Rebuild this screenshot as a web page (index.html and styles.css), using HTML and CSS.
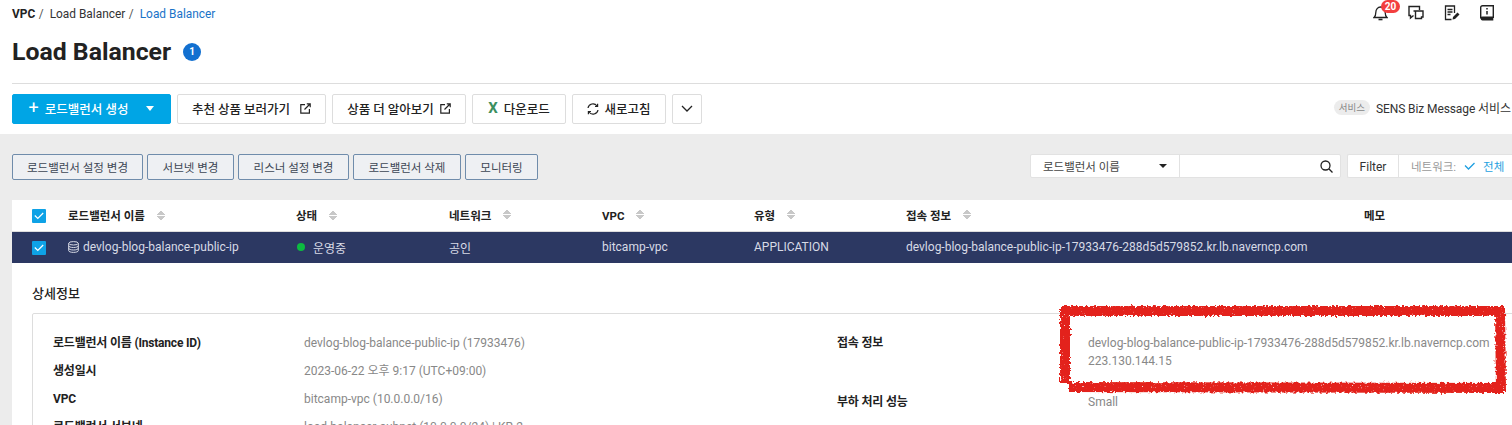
FILE: index.html
```html
<!DOCTYPE html>
<html lang="ko">
<head>
    <meta charset="UTF-8">
    <title>Load Balancer</title>
    <link rel="stylesheet" href="styles.css">
</head>
<body>
<div class="page">
    <div class="top">
        <div class="topbar">
            <div class="crumbs">
                <b>VPC</b><span class="sep">/</span><span>Load Balancer</span><span class="sep">/</span><span class="crumb-on">Load Balancer</span>
            </div>
            <div class="top-icons">
                <div class="bell">
                    <svg width="15" height="16" viewBox="0 0 15 16" fill="none" stroke="#222" stroke-width="1.3"><path d="M1 12.500c1.300-1 1.800-2.500 1.800-5 0-3 2-5.500 4.700-5.500s4.700 2.500 4.700 5.500c0 2.500.5 4 1.800 5z"/><path d="M5.500 14.500h4" stroke-width="1.600"/></svg>
                    <span class="badge-red">20</span>
                </div>
                <svg width="16" height="16" viewBox="0 0 16 16" fill="none" stroke="#222" stroke-width="1.400"><path d="M11.500 5V1.500H1v9h1.500v2.500l3-2.500"/><path d="M5.500 6h9.500v6h-1.500v1.500H7.500V6z" fill="#fff"/></svg>
                <svg width="16" height="16" viewBox="0 0 16 16" fill="none" stroke="#222" stroke-width="1.300"><path d="M10.500 8V1H1.500v13.500h6"/><path d="M3.500 4.500h5M3.500 7h5M3.500 9.500h3"/><path d="M8.500 14.500l.5-2.500 4.500-4.500 2 2-4.500 4.500z" fill="#222" stroke="none"/></svg>
                <svg width="14" height="16" viewBox="0 0 14 16" fill="none"><path d="M2.500.7h10.800v11.600H2.500c-1 0-1.800.5-1.800 1.300V2.500C.7 1.500 1.500.7 2.500.7z" stroke="#222" stroke-width="1.400"/><path d="M.7 13.500c0-1 .8-1.500 1.800-1.500h10.800v3.500H2.500c-1 0-1.800-.8-1.800-2z" fill="#222"/><path d="M7 3v1.500M7 6v3.500" stroke="#222" stroke-width="1.500"/></svg>
            </div>
        </div>
        <div class="title-row">
            <h1>Load Balancer</h1>
            <span class="count">1</span>
        </div>
        <div class="toolbar">
            <button class="btn btn-create"><span class="plus">+</span>로드밸런서 생성<span class="caret-white"></span></button>
            <button class="btn btn-rec">추천 상품 보러가기<svg class="ext" width="11" height="11" viewBox="0 0 11 11" fill="none" stroke="#222" stroke-width="1.200"><path d="M5 1.600H.8v8.600h8.600V6"/><path d="M6.800.8h3.400v3.400M10 1L4.500 6.500"/></svg></button>
            <button class="btn btn-more">상품 더 알아보기<svg class="ext" width="11" height="11" viewBox="0 0 11 11" fill="none" stroke="#222" stroke-width="1.200"><path d="M5 1.600H.8v8.600h8.600V6"/><path d="M6.800.8h3.400v3.400M10 1L4.500 6.500"/></svg></button>
            <button class="btn btn-down"><span class="excel">X</span>다운로드</button>
            <button class="btn btn-refresh"><svg width="12" height="12" viewBox="0 0 12 12" fill="none" stroke="#222" stroke-width="1.200"><path d="M1 5a5 5 0 0 1 9-2"/><path d="M11 7a5 5 0 0 1-9 2"/><path d="M10.600.8v2.700H8M1.400 11.200V8.500H4"/></svg>새로고침</button>
            <button class="btn btn-drop"><svg width="12" height="7" viewBox="0 0 12 7" fill="none" stroke="#222" stroke-width="1.300"><path d="M1 1l5 5 5-5"/></svg></button>
            <div class="service"><span class="pill">서비스</span><span class="service-name">SENS Biz Message 서비스</span></div>
        </div>
    </div>

    <div class="content">
        <div class="actions">
            <button class="act a1">로드밸런서 설정 변경</button>
            <button class="act a2">서브넷 변경</button>
            <button class="act a3">리스너 설정 변경</button>
            <button class="act a4">로드밸런서 삭제</button>
            <button class="act a5">모니터링</button>
            <div class="search">
                <div class="search-select">로드밸런서 이름<span class="caret-dark"></span></div>
                <div class="search-input"><svg width="13" height="13" viewBox="0 0 13 13" fill="none" stroke="#222" stroke-width="1.300"><circle cx="5.500" cy="5.500" r="4.500"/><path d="M8.800 8.800L12.500 12.500"/></svg></div>
            </div>
            <div class="filter">
                <div class="filter-label">Filter</div>
                <div class="filter-val"><span class="filter-key">네트워크:</span><svg width="11" height="8" viewBox="0 0 11 8" fill="none" stroke="#1e9fe0" stroke-width="1.300"><path d="M1 3.500l3.500 3.500L10.500 1"/></svg><span class="filter-all">전체</span></div>
            </div>
        </div>

        <div class="panel">
            <div class="row head">
                <div class="c-check"><span class="check"><svg width="10" height="8" viewBox="0 0 10 8" fill="none" stroke="#fff" stroke-width="1.200"><path d="M.8 3.500L3.800 6.500 9.200 1"/></svg></span></div>
                <div class="c-name">로드밸런서 이름<span class="sort"></span></div>
                <div class="c-state">상태<span class="sort"></span></div>
                <div class="c-net">네트워크<span class="sort"></span></div>
                <div class="c-vpc">VPC<span class="sort"></span></div>
                <div class="c-type">유형<span class="sort"></span></div>
                <div class="c-conn">접속 정보<span class="sort"></span></div>
                <div class="c-memo">메모</div>
            </div>
            <div class="row selected">
                <div class="c-check"><span class="check"><svg width="10" height="8" viewBox="0 0 10 8" fill="none" stroke="#fff" stroke-width="1.200"><path d="M.8 3.500L3.800 6.500 9.200 1"/></svg></span></div>
                <div class="c-name"><svg class="db" width="11" height="12" viewBox="0 0 11 12" fill="none" stroke="#d8dbe6" stroke-width="1"><ellipse cx="5.500" cy="2.300" rx="4.800" ry="1.700"/><path d="M.7 2.300v7.400c0 1 2.200 1.700 4.800 1.700s4.800-.7 4.800-1.700V2.300M.7 4.800c0 1 2.200 1.700 4.800 1.700s4.800-.7 4.800-1.700M.7 7.300C.7 8.300 2.900 9 5.500 9s4.800-.7 4.800-1.700"/></svg>devlog-blog-balance-public-ip</div>
                <div class="c-state"><span class="dot"></span>운영중</div>
                <div class="c-net">공인</div>
                <div class="c-vpc">bitcamp-vpc</div>
                <div class="c-type">APPLICATION</div>
                <div class="c-conn">devlog-blog-balance-public-ip-17933476-288d5d579852.kr.lb.naverncp.com</div>
            </div>
            <div class="detail">
                <h2>상세정보</h2>
                <div class="detail-box">
                    <div class="d-col d-left">
                        <div class="d-row"><b>로드밸런서 이름 (Instance ID)</b><span>devlog-blog-balance-public-ip (17933476)</span></div>
                        <div class="d-row"><b>생성일시</b><span>2023-06-22 오후 9:17 (UTC+09:00)</span></div>
                        <div class="d-row"><b>VPC</b><span>bitcamp-vpc (10.0.0.0/16)</span></div>
                        <div class="d-row"><b>로드밸런서 서브넷</b><span>load-balancer-subnet (10.0.0.0/24) | KR-2</span></div>
                    </div>
                    <div class="d-col d-right">
                        <div class="d-row d-conn"><b>접속 정보</b><span>devlog-blog-balance-public-ip-17933476-288d5d579852.kr.lb.naverncp.com<br>223.130.144.15</span></div>
                        <div class="d-row"><b>부하 처리 성능</b><span>Small</span></div>
                    </div>
                </div>
            </div>
        </div>
    </div>

    <svg class="scribble" width="452" height="100" viewBox="0 0 452 100" fill="none">
        <defs>
            <filter id="rough" x="-5%" y="-15%" width="110%" height="130%">
                <feTurbulence type="fractalNoise" baseFrequency="0.4" numOctaves="2" seed="4" result="warp"/>
                <feDisplacementMap in="SourceGraphic" in2="warp" scale="5" result="moved"/>
                <feTurbulence type="fractalNoise" baseFrequency="0.9" numOctaves="1" seed="9"/>
                <feColorMatrix values="0 0 0 0 0  0 0 0 0 0  0 0 0 0 0  0 0 0 -7 5.800"/>
                <feComposite in="moved" operator="in"/>
            </filter>
        </defs>
        <g filter="url(#rough)" stroke="#e3241b" stroke-width="10">
            <path d="M3 9L446 9"/>
            <path d="M442 7L443 90"/>
            <path d="M11 85L446 86"/>
            <path d="M7 4L7 81"/>
        </g>
    </svg>
</div>
</body>
</html>
```

FILE: styles.css
```css
* {
    box-sizing: border-box;
}
html, body {
    margin: 0;
    padding: 0;
}
body {
    font-family: Roboto, "Noto Sans CJK KR", sans-serif;
    font-size: 12px;
    color: #222;
    background: #ececec;
}
button {
    font-family: inherit;
    cursor: pointer;
}
.page {
    position: relative;
    width: 1512px;
    height: 425px;
    overflow: hidden;
}

/* top area */
.top {
    height: 134px;
    background: #fff;
    padding: 0 0 0 12px;
}
.topbar {
    height: 28px;
    display: flex;
    justify-content: space-between;
    align-items: center;
}
.crumbs {
    font-size: 11.900px;
    color: #333;
    display: flex;
}
.crumbs b {
    font-weight: 700;
    color: #222;
}
.sep {
    margin: 0 6px 0 3.500px;
    color: #555;
}
.crumb-on {
    color: #1a73c8;
}
.top-icons {
    display: flex;
    align-items: center;
    gap: 20px;
    padding-right: 18px;
    margin-top: -3px;
}
.bell {
    position: relative;
    width: 15px;
    height: 16px;
}
.badge-red {
    position: absolute;
    left: 8px;
    top: -5px;
    width: 19px;
    height: 13px;
    border-radius: 7px;
    background: #f33f3f;
    color: #fff;
    font-size: 10px;
    font-weight: 700;
    line-height: 13px;
    text-align: center;
}
.title-row {
    height: 48px;
    display: flex;
    align-items: center;
}
h1 {
    margin: 0;
    font-size: 24.800px;
    font-weight: 700;
    color: #222;
    line-height: 48px;
}
.count {
    margin-left: 12px;
    width: 18px;
    height: 18px;
    border-radius: 50%;
    background: #1270d0;
    color: #fff;
    font-size: 10px;
    font-weight: 700;
    line-height: 18px;
    text-align: center;
}
.toolbar {
    border-top: 1px solid #ddd;
    margin-top: 7px;
    padding-top: 10px;
    display: flex;
    align-items: flex-start;
    gap: 6px;
}
.btn {
    height: 30px;
    padding: 0 0 2px;
    background: #fff;
    border: 1px solid #ddd;
    border-radius: 2px;
    font-size: 12.500px;
    font-weight: 500;
    color: #222;
    display: flex;
    align-items: center;
    justify-content: center;
}
.btn-create {
    width: 159px;
    background: #00a5e5;
    border-color: #00a5e5;
    color: #fff;
}
.plus {
    font-size: 18px;
    font-weight: 400;
    line-height: 18px;
    margin-right: 6px;
}
.caret-white {
    width: 0;
    height: 0;
    margin-left: 18px;
    border-left: 4px solid transparent;
    border-right: 4px solid transparent;
    border-top: 5px solid #fff;
}
.btn-rec {
    width: 149px;
}
.btn-more {
    width: 134px;
}
.ext {
    margin-left: 10px;
}
.btn-more .ext {
    margin-left: 6px;
}
.btn-down {
    width: 94px;
}
.excel {
    color: #3c8f5f;
    font-weight: 700;
    font-size: 15px;
    margin-right: 6px;
}
.btn-refresh {
    width: 94px;
}
.btn-refresh svg {
    margin-right: 5px;
    margin-top: 2px;
}
.btn-drop {
    width: 30px;
}
.service {
    margin-left: auto;
    height: 26px;
    display: flex;
    align-items: center;
    white-space: nowrap;
}
.pill {
    background: #ececec;
    color: #888;
    font-size: 9.500px;
    height: 15px;
    line-height: 15px;
    padding: 0 5px;
    border-radius: 8px;
    margin-right: 6px;
}
.service-name {
    font-size: 12px;
    color: #333;
    width: 136px;
    letter-spacing: -0.1px;
}

/* actions row */
.content {
    padding: 20px 0 0 12px;
}
.actions {
    display: flex;
    align-items: flex-start;
    height: 46px;
    gap: 4px;
}
.actions > * {
    flex: none;
}
.act {
    height: 26px;
    padding: 0 0 1px;
    background: #eef0f3;
    border: 1px solid #6f8cab;
    border-radius: 2px;
    font-size: 11.500px;
    color: #3c4654;
}
.a1 { width: 131px; }
.a2 { width: 87px; }
.a3 { width: 111px; }
.a4 { width: 108px; }
.a5 { width: 73px; }
.search {
    margin-left: 488px;
    width: 311px;
    height: 24px;
    display: flex;
    background: #fff;
    border: 1px solid #e2e2e2;
    border-radius: 2px;
}
.search-select {
    width: 149px;
    padding: 0 12px;
    border-right: 1px solid #e2e2e2;
    font-size: 11.500px;
    color: #444;
    display: flex;
    align-items: center;
    justify-content: space-between;
}
.caret-dark {
    width: 0;
    height: 0;
    border-left: 4px solid transparent;
    border-right: 4px solid transparent;
    border-top: 4px solid #222;
}
.search-input {
    flex: 1;
    display: flex;
    align-items: center;
    justify-content: flex-end;
    padding-right: 7px;
}
.filter {
    width: 165px;
    height: 24px;
    display: flex;
    background: #fff;
    border: 1px solid #e2e2e2;
    border-right: 0;
    border-radius: 2px 0 0 2px;
    margin-left: 2px;
}
.filter-label {
    width: 51px;
    border-right: 1px solid #e2e2e2;
    font-size: 12px;
    color: #333;
    text-align: center;
    line-height: 24px;
}
.filter-val {
    flex: 1;
    display: flex;
    align-items: center;
    padding-left: 12px;
    font-size: 11.500px;
}
.filter-key {
    color: #999;
    margin-right: 8px;
}
.filter-all {
    color: #1e9fe0;
    margin-left: 8px;
}

/* table */
.panel {
    background: #fff;
    height: 225px;
}
.row {
    display: flex;
    align-items: center;
    white-space: nowrap;
}
.head {
    height: 32px;
    border-bottom: 1px solid #ddd;
    font-weight: 700;
    font-size: 11.500px;
    color: #222;
}
.selected {
    height: 31px;
    background: #2c3862;
    color: #d8dbe6;
    font-size: 12px;
}
.c-check { width: 56px; padding-left: 20px; display: flex; }
.c-name { width: 228px; display: flex; align-items: center; padding-bottom: 1px; }
.c-state { width: 153px; display: flex; align-items: center; padding-bottom: 1px; }
.c-net { width: 153px; padding-bottom: 1px; }
.c-vpc { width: 152px; padding-bottom: 1px; }
.c-type { width: 152px; padding-bottom: 1px; }
.c-conn { width: 458px; padding-bottom: 1px; }
.c-memo { width: 100px; padding-bottom: 1px; }
.check {
    width: 14px;
    height: 14px;
    background: #0ea2e6;
    border-radius: 1px;
    display: flex;
    align-items: center;
    justify-content: center;
}
.sort {
    display: inline-block;
    margin-left: 12px;
    width: 8px;
    height: 11px;
    margin-top: 1px;
    background:
        linear-gradient(to top left, #c8c8c8 50%, transparent 50%) 0 0 / 4px 5px no-repeat,
        linear-gradient(to top right, #c8c8c8 50%, transparent 50%) 4px 0 / 4px 5px no-repeat,
        linear-gradient(to bottom left, #c8c8c8 50%, transparent 50%) 0 6px / 4px 5px no-repeat,
        linear-gradient(to bottom right, #c8c8c8 50%, transparent 50%) 4px 6px / 4px 5px no-repeat;
}
.db {
    margin-right: 4px;
}
.dot {
    width: 8px;
    height: 8px;
    border-radius: 50%;
    background: #0cbb40;
    margin: 0 8px 0 1px;
}

/* detail */
.detail {
    padding: 23px 0 0 20px;
}
h2 {
    margin: 0 0 11px;
    font-size: 13px;
    font-weight: 500;
    line-height: 16px;
    color: #222;
}
.detail-box {
    width: 1500px;
    height: 140px;
    border: 1px solid #ddd;
    border-radius: 2px;
    padding: 20px 20px 0;
    display: flex;
    font-size: 12px;
}
.d-left {
    width: 784px;
}
.d-row {
    display: flex;
    line-height: 18px;
    margin-bottom: 10px;
}
.d-row b {
    font-weight: 700;
    color: #222;
    width: 251px;
    flex: none;
    letter-spacing: -0.2px;
}
.d-row span {
    color: #888;
    white-space: nowrap;
}
.d-conn {
    margin-bottom: 23px;
}

.scribble {
    position: absolute;
    left: 1058px;
    top: 302px;
}
```
